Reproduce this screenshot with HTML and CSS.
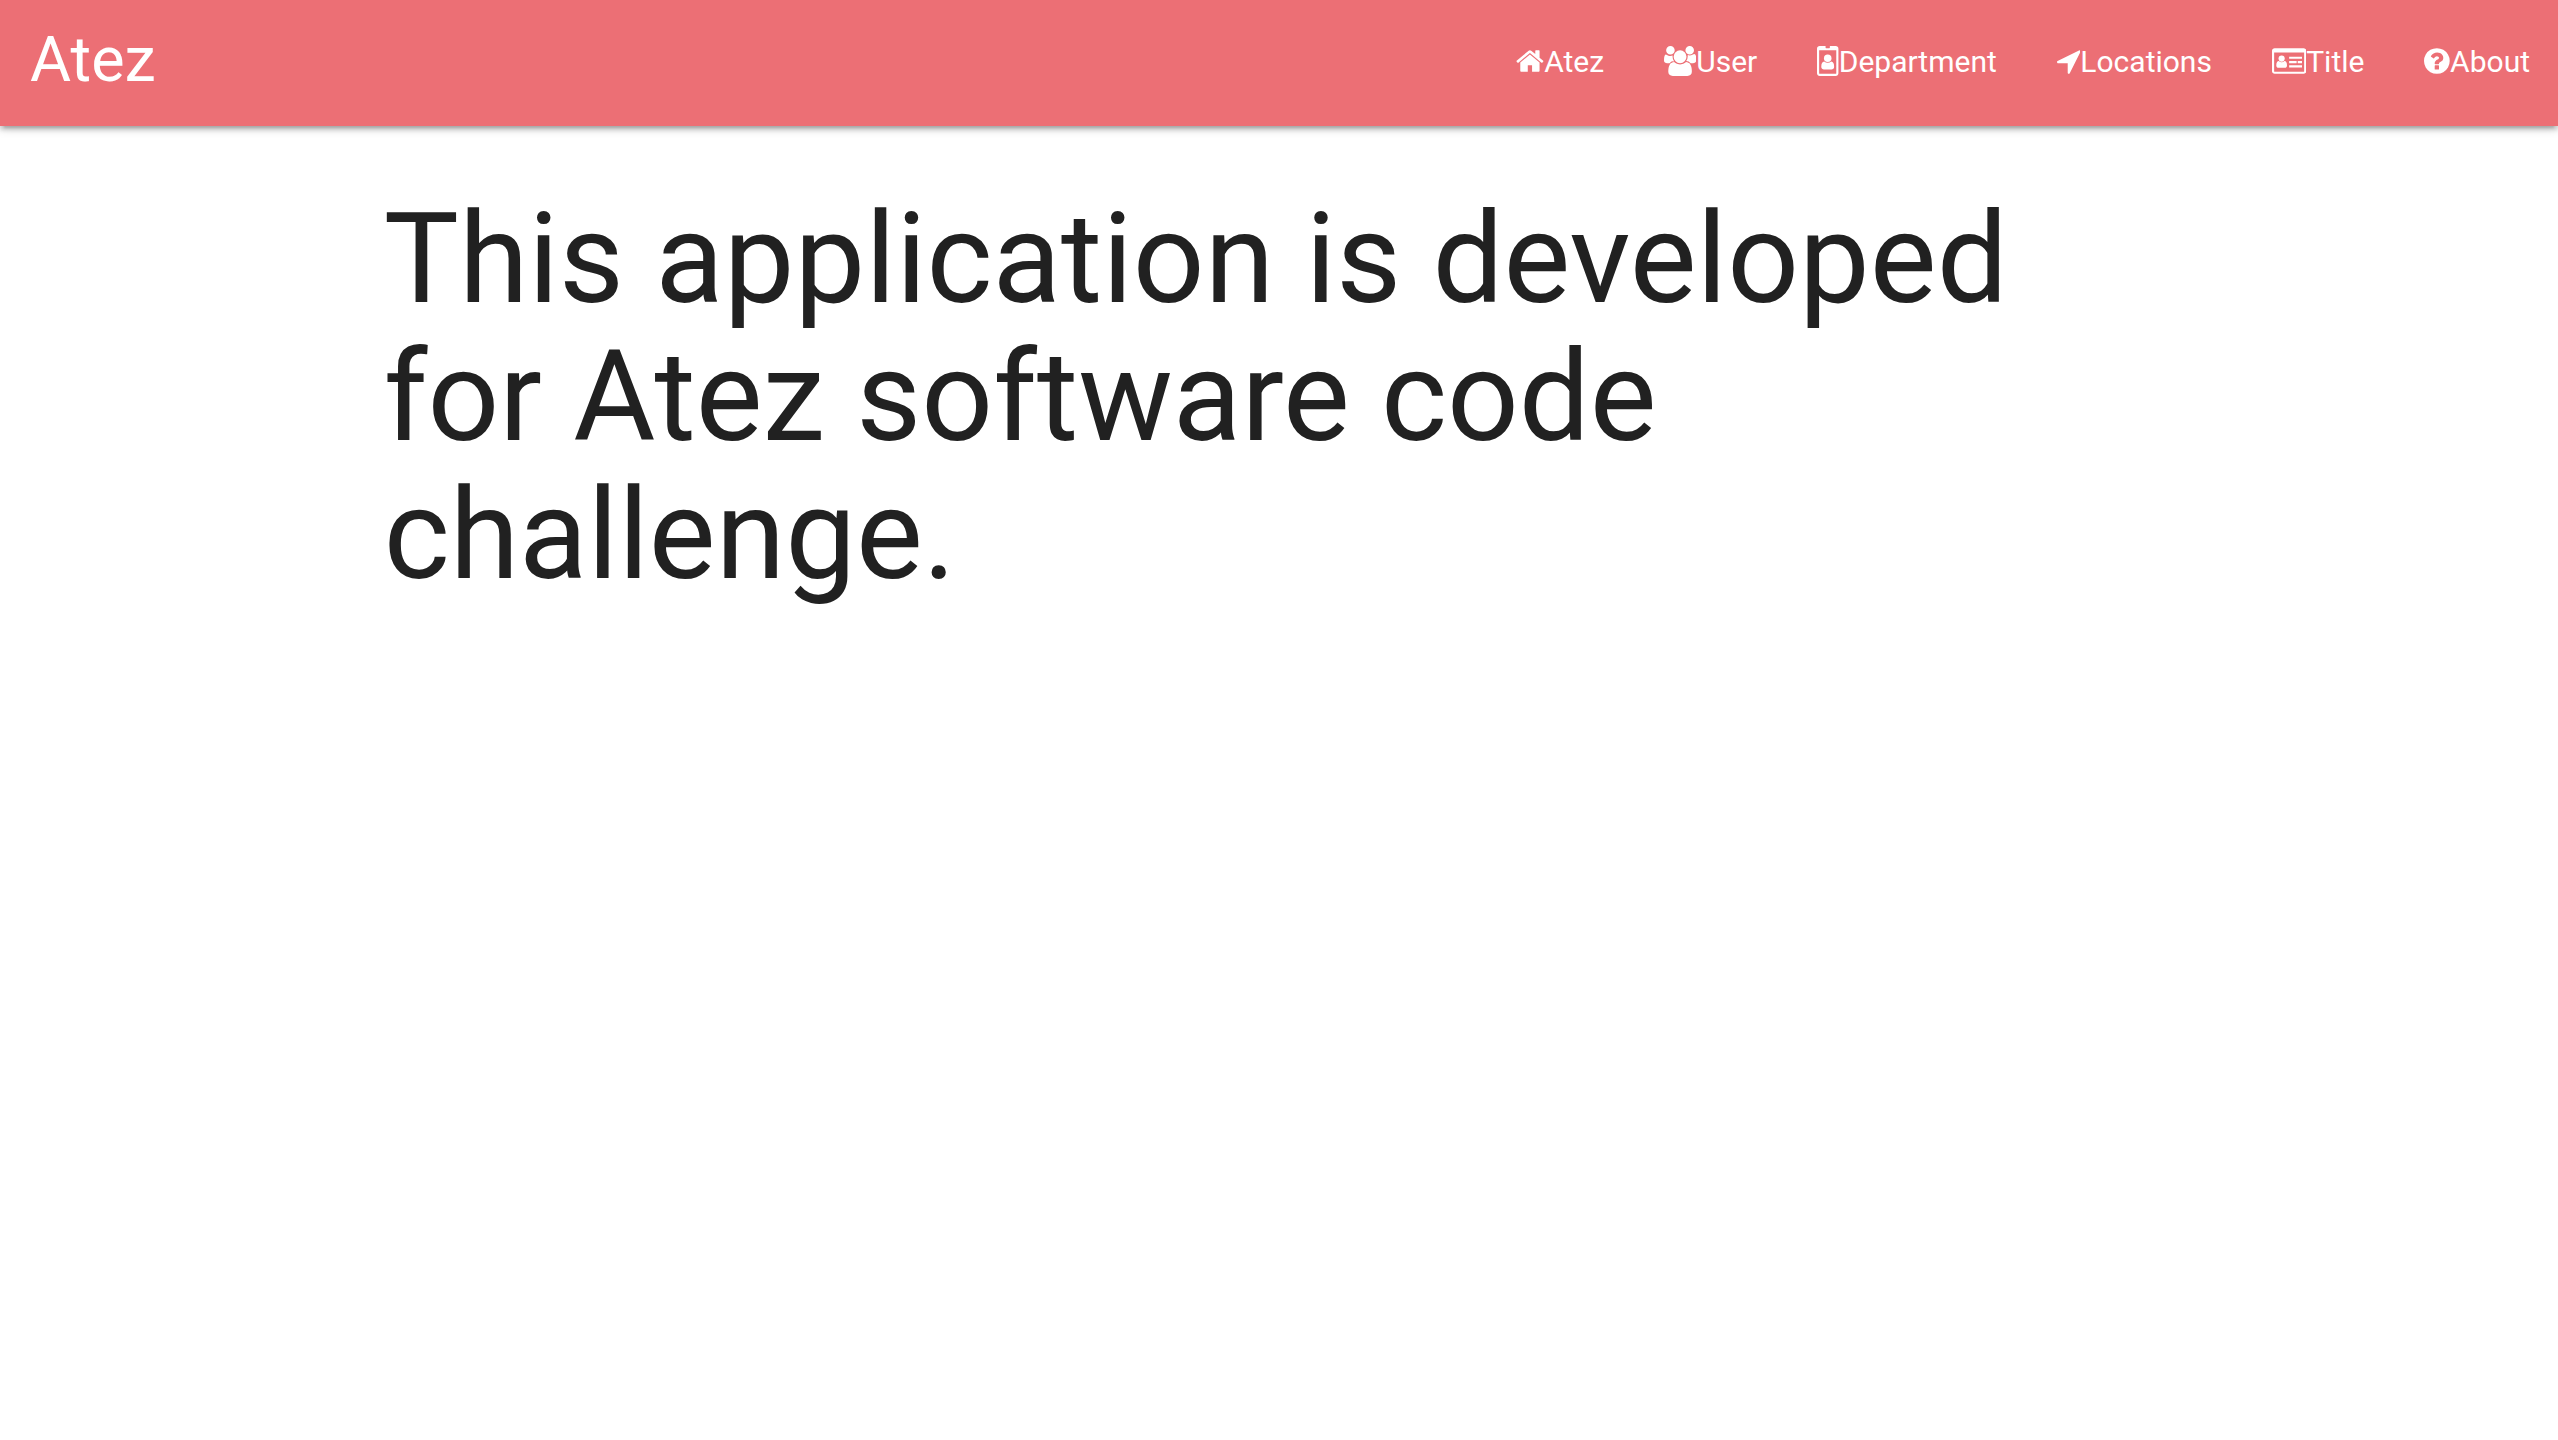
FILE: index.html
```html
<!DOCTYPE html>
<html lang="en">
<head>
<meta charset="utf-8">
<meta name="viewport" content="width=device-width, initial-scale=1">
<title>Atez</title>
<link rel="stylesheet" href="styles.css">
</head>
<body>
<header class="navbar">
  <a class="brand" href="#">Atez</a>
  <nav aria-label="Main">
    <ul class="menu">
      <li><a class="menu-link" href="#"><svg class="icon" viewBox="64 0 1664 1792" aria-hidden="true"><path d="M1472 992v480q0 26-19 45t-45 19h-384v-384h-256v384h-384q-26 0-45-19t-19-45v-480q0-1 .5-3t.5-3l575-474 575 474q1 2 1 6zm223-69l-62 74q-8 9-21 11h-3q-13 0-21-7l-692-577-692 577q-12 8-24 7-13-2-21-11l-62-74q-8-10-7-23.5t11-21.5l719-599q32-26 76-26t76 26l244 204v-195q0-14 9-23t23-9h192q14 0 23 9t9 23v408l219 182q10 8 11 21.5t-7 23.5z"/></svg>Atez</a></li>
      <li><a class="menu-link" href="#"><svg class="icon" viewBox="64 0 1920 1792" aria-hidden="true"><path d="M657 896q-162 5-265 128h-134q-82 0-138-40.5t-56-118.5q0-353 124-353 6 0 43.5 21t97.5 42.5 119 21.5q67 0 133-23-5 37-5 66 0 159 93 293zm1071 637q0 120-73 189.5t-194 69.5h-874q-121 0-194-69.5t-73-189.5q0-53 3.5-103.5t14-109 26.5-108.5 43-97.5 62-81 85.5-53.5 111.5-20q10 0 43 21.5t73 48 107 48 135 21.5 135-21.5 107-48 73-48 43-21.5q61 0 111.5 20t85.5 53.5 62 81 43 97.5 26.5 108.5 14 109 3.5 103.5zm-1024-1277q0 106-75 181t-181 75-181-75-75-181 75-181 181-75 181 75 75 181zm704 384q0 159-112.5 271.5t-271.5 112.5-271.5-112.5-112.5-271.5 112.5-271.5 271.5-112.5 271.5 112.5 112.5 271.5zm576 225q0 78-56 118.5t-138 40.5h-134q-103-123-265-128 93-134 93-293 0-29-5-66 66 23 133 23 59 0 119-21.5t97.5-42.5 43.5-21q124 0 124 353zm-128-609q0 106-75 181t-181 75-181-75-75-181 75-181 181-75 181 75 75 181z"/></svg>User</a></li>
      <li><a class="menu-link" href="#"><svg class="icon" viewBox="0 0 1280 1792" aria-hidden="true"><path fill-rule="evenodd" d="M160 0h352v96q0 32 32 32h192q32 0 32-32v-96h352q66 0 113 47t47 113v1472q0 66-47 113t-113 47h-960q-66 0-113-47t-47-113v-1472q0-66 47-113t113-47zM128 256v1376q0 32 32 32h960q32 0 32-32v-1376z"/><circle cx="640" cy="736" r="224"/><path d="M430 920q90 88 210 88t210-88q174 10 174 316 0 76-46 124t-114 48h-448q-68 0-114-48t-46-124q0-306 174-316z"/></svg>Department</a></li>
      <li><a class="menu-link" href="#"><svg class="icon" viewBox="192 0 1408 1792" aria-hidden="true"><path d="M1593 349l-640 1280q-17 35-57 35-5 0-15-2-22-5-35.5-22.5t-13.5-39.5v-576h-576q-22 0-39.5-13.5t-22.5-35.5 4-42 29-30l1280-640q13-7 29-7 27 0 45 19 15 14 18.5 34.5t-6.5 39.5z"/></svg>Locations</a></li>
      <li><a class="menu-link" href="#"><svg class="icon" viewBox="0 0 2048 1792" aria-hidden="true"><path fill-rule="evenodd" d="M160 128h1728q66 0 113 47t47 113v1216q0 66-47 113t-113 47h-1728q-66 0-113-47t-47-113v-1216q0-66 47-113t113-47zM128 384v1120q0 32 32 32h1728q32 0 32-32v-1120z"/><circle cx="576" cy="752" r="184"/><path d="M410 896q70 72 166 72t166-72q154 8 154 272 0 60-38 94t-90 34h-384q-52 0-90-34t-38-94q0-264 154-272z"/><path d="M1024 1152h768v128h-768zM1024 896h448v128h-448zM1536 896h256v128h-256zM1024 640h768v128h-768z"/></svg>Title</a></li>
      <li><a class="menu-link" href="#"><svg class="icon" viewBox="128 0 1536 1792" aria-hidden="true"><path d="M1024 1376v-192q0-14-9-23t-23-9h-192q-14 0-23 9t-9 23v192q0 14 9 23t23 9h192q14 0 23-9t9-23zm256-672q0-88-55.5-163t-138.5-116-170-41q-243 0-371 213-15 24 8 42l132 100q7 6 19 6 16 0 25-12 53-68 86-92 34-24 86-24 48 0 85.5 26t37.5 59q0 38-20 61t-68 45q-63 28-115.5 86.5t-52.5 125.5v36q0 14 9 23t23 9h192q14 0 23-9t9-23q0-19 21.5-49.5t54.5-49.5q32-18 49-28.5t46-35 44.5-48 28-60.5 12.5-81zm384 192q0 209-103 385.5t-279.5 279.5-385.5 103-385.5-103-279.5-279.5-103-385.5 103-385.5 279.5-279.5 385.5-103 385.5 103 279.5 279.5 103 385.5z"/></svg>About</a></li>
    </ul>
  </nav>
</header>
<main class="container">
  <h1 class="headline">This application is developed for Atez software code challenge.</h1>
</main>
</body>
</html>
```
FILE: styles.css
```css
* {
  box-sizing: border-box;
}

body {
  margin: 0;
  background: #fff;
  color: #212121;
  font-family: Roboto, "Open Sans", sans-serif;
  font-size: 30px;
}

.navbar {
  display: flex;
  justify-content: space-between;
  align-items: flex-start;
  padding: 0 28px 2px 30px;
  background: #ec6f75;
  color: #fff;
  line-height: 124px;
  box-shadow:
    0 4px 4px 0 rgba(0, 0, 0, 0.14),
    0 6px 2px -4px rgba(0, 0, 0, 0.12),
    0 2px 10px 0 rgba(0, 0, 0, 0.2);
}

.brand {
  color: inherit;
  font-size: 63px;
  line-height: 120px;
  text-decoration: none;
}

.menu {
  display: flex;
  gap: 60px;
  margin: 0;
  padding: 0;
  list-style: none;
}

.menu-link {
  display: flex;
  align-items: center;
  color: inherit;
  text-decoration: none;
}

.icon {
  flex: none;
  height: 30px;
  margin-bottom: 2px;
  fill: currentColor;
}

.container {
  width: 70%;
  margin: 0 auto;
}

.headline {
  margin: 64px 0;
  font-size: 126px;
  font-weight: 400;
  line-height: 138px;
}
```
